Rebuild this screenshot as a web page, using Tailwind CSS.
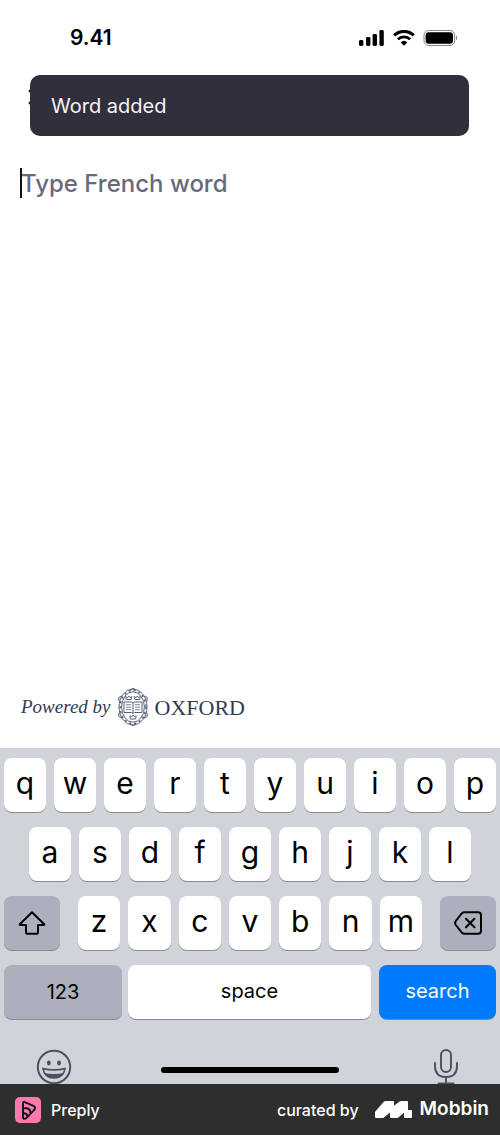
<!DOCTYPE html>
<html lang="en">

<head>
    <meta charset="UTF-8">
    <meta name="viewport" content="width=device-width, initial-scale=1.0">
    <script src="https://cdn.jsdelivr.net/npm/@tailwindcss/browser@4"></script>
    <title>Add word</title>
</head>

<body class="flex min-h-screen flex-col bg-white font-['Inter',sans-serif] text-black">

    <!-- status bar -->
    <header class="flex h-[75px] items-center justify-between pr-[41px] pl-[70px]">
        <span class="text-[21px] font-semibold">9.41</span>
        <div class="flex items-center gap-2">
            <svg class="h-4 w-[26px]" viewBox="0 0 26 16">
                <rect x="0" y="10" width="4.4" height="6" rx="1.4" />
                <rect x="7" y="7" width="4.4" height="9" rx="1.4" />
                <rect x="13.6" y="4" width="4.4" height="12" rx="1.4" />
                <rect x="20.4" y="0" width="4.4" height="16" rx="1.4" />
            </svg>
            <svg class="h-4 w-[22px]" viewBox="0 0 22 16">
                <path d="M1.2 5.4A14 14 0 0 1 20.8 5.4" fill="none" stroke="#000" stroke-width="3" />
                <path d="M4.9 9.3A8.7 8.7 0 0 1 17.1 9.3" fill="none" stroke="#000" stroke-width="2.8" />
                <path d="M7.7 12.4A4.8 4.8 0 0 1 14.3 12.4L11 15.8Z" />
            </svg>
            <svg class="h-4 w-9" viewBox="0 0 36 16">
                <rect x="1" y=".5" width="30.6" height="15" rx="4.6" fill="none" stroke="#888" />
                <rect x="2.6" y="2.2" width="27.4" height="11.6" rx="3.2" />
                <path d="M33 5.6C34.6 6.2 34.6 9.6 33 10.2Z" fill="#888" />
            </svg>
        </div>
    </header>

    <main class="relative flex flex-1 flex-col">
        <div class="flex h-[78px] items-start px-7 pt-[14px]">
            <button aria-label="Close">
                <svg class="size-4" viewBox="0 0 16 16" fill="none" stroke="#121117" stroke-width="2.4" stroke-linecap="round">
                    <path d="M1.8 1.8 14.2 14.2M14.2 1.8 1.8 14.2" />
                </svg>
            </button>
        </div>

        <div role="status" class="absolute top-0 right-[31px] left-[30px] flex h-[61px] items-center rounded-[10px] bg-[#322f3c] px-[21px] text-[20px] text-[#f4f4f8]">
            Word added
        </div>

        <div class="relative px-[21px]">
            <input type="text" aria-label="Type French word" placeholder="Type French word" class="h-[60px] w-full text-[24px] font-medium outline-none placeholder:text-[#6a697c]">
            <span class="absolute top-[15px] left-5 h-[30px] w-0.5 bg-[#121117]"></span>
        </div>

        <div class="mt-auto mb-[21px] flex h-10 items-center gap-[7px] px-[21px] font-['Liberation_Serif',serif] text-[#323a54]">
            <span class="text-[19px] italic">Powered by</span>
            <svg class="h-[38px] w-[30px]" viewBox="0 0 30 38" fill="none" stroke="#59617a" stroke-width="1">
                <ellipse cx="15" cy="19" rx="11.4" ry="15.2" />
                <ellipse cx="15" cy="19" rx="14" ry="18" />
                <ellipse cx="15" cy="19" rx="12.8" ry="16.7" stroke-width="1.6" stroke-dasharray="2 3" />
                <path d="M6 14H13.5L15 15L16.5 14H24V24.5H16.5L15 25.5L13.5 24.5H6ZM15 15V25" />
                <path d="M8 16.7H13M8 19.2H13M8 21.7H13M17 16.7H22M17 19.2H22M17 21.7H22" stroke-width=".8" />
                <path d="M8.3 11.5 7.7 8.5 9.6 9.6 10.8 8 12 9.6 13.8 8.5 13.2 11.5ZM16.8 11.5 16.2 8.5 18 9.6 19.2 8 20.4 9.6 22.3 8.5 21.7 11.5ZM12.4 31 11.8 27.8 13.7 28.8 15 27 16.3 28.8 18.2 27.8 17.6 31Z" />
                <path d="M12 1.8 15 .4 18 1.8M12 36.2 15 37.6 18 36.2M.8 13V9.5L4 8M29.2 13V9.5L26 8M.8 25V28.5L4 30M29.2 25V28.5L26 30" />
            </svg>
            <span class="text-[22px]">OXFORD</span>
        </div>
    </main>

    <!-- keyboard -->
    <section class="flex h-[336px] flex-col gap-[15px] overflow-hidden bg-[#d0d3da] px-1 pt-[10px] text-[30px] leading-none">
        <div class="grid h-[54px] shrink-0 grid-cols-10 gap-2 *:rounded-lg *:bg-white *:pb-1 *:shadow-[0_1px_0_#898a8d]">
            <button>q</button>
            <button>w</button>
            <button>e</button>
            <button>r</button>
            <button>t</button>
            <button>y</button>
            <button>u</button>
            <button>i</button>
            <button>o</button>
            <button>p</button>
        </div>
        <div class="grid h-[54px] shrink-0 grid-cols-9 gap-2 px-[25px] *:rounded-lg *:bg-white *:pb-1 *:shadow-[0_1px_0_#898a8d]">
            <button>a</button>
            <button>s</button>
            <button>d</button>
            <button>f</button>
            <button>g</button>
            <button>h</button>
            <button>j</button>
            <button>k</button>
            <button>l</button>
        </div>
        <div class="flex h-[54px] shrink-0 gap-[18px]">
            <button aria-label="Shift" class="flex w-14 items-center justify-center rounded-lg bg-[#abb0bc] shadow-[0_1px_0_#898a8d]">
                <svg class="h-6 w-7" viewBox="0 0 28 24" fill="none" stroke="#000" stroke-width="1.9" stroke-linejoin="round">
                    <path d="M14 1.2 26.2 13.2Q26.6 14 25.8 14H20V21.2Q20 22.8 18.4 22.8H9.6Q8 22.8 8 21.2V14H2.2Q1.4 14 1.8 13.2Z" />
                </svg>
            </button>
            <div class="grid flex-1 grid-cols-7 gap-2 *:rounded-lg *:bg-white *:pb-1 *:shadow-[0_1px_0_#898a8d]">
                <button>z</button>
                <button>x</button>
                <button>c</button>
                <button>v</button>
                <button>b</button>
                <button>n</button>
                <button>m</button>
            </div>
            <button aria-label="Delete" class="flex w-14 items-center justify-center rounded-lg bg-[#abb0bc] shadow-[0_1px_0_#898a8d]">
                <svg class="h-6 w-7" viewBox="0 0 28 24" fill="none" stroke="#000" stroke-width="2" stroke-linejoin="round" stroke-linecap="round">
                    <path d="M10.4 1.2H24Q27 1.2 27 4.2V19.8Q27 22.8 24 22.8H10.4Q9 22.8 8 21.8L1.8 14Q.4 12 1.8 10L8 2.2Q9 1.2 10.4 1.2ZM12 7.8 20.4 16.2M20.4 7.8 12 16.2" />
                </svg>
            </button>
        </div>
        <div class="flex h-[54px] shrink-0 text-[20px] *:rounded-lg *:shadow-[0_1px_0_#898a8d]">
            <button class="w-[118px] bg-[#abb0bc]">123</button>
            <button class="mr-2 ml-1.5 flex-1 bg-white pb-0.5">space</button>
            <button class="w-[117px] bg-[#007aff] pb-0.5 text-white">search</button>
        </div>
        <div class="flex items-start justify-between px-8 pt-[15px]">
            <button aria-label="Emoji">
                <svg class="size-9" viewBox="0 0 36 36" fill="none" stroke="#4b505b" stroke-width="2">
                    <circle cx="18" cy="18" r="16.2" />
                    <ellipse cx="12.8" cy="14" rx="1.9" ry="2.4" fill="#4b505b" stroke="none" />
                    <ellipse cx="23" cy="14" rx="1.9" ry="2.4" fill="#4b505b" stroke="none" />
                    <path d="M7 19.6Q18 22.2 29 19.6Q27.6 29 18 29Q8.4 29 7 19.6Z" stroke-width="1.6" />
                    <path d="M8.4 24Q18 26 27.6 24Q24.5 29 18 29Q11.5 29 8.4 24Z" fill="#4b505b" stroke="none" />
                </svg>
            </button>
            <span class="mt-[18px] h-1.5 w-[178px] rounded-full bg-black"></span>
            <button aria-label="Dictate" class="flex w-9 justify-center">
                <svg class="h-9 w-[26px]" viewBox="0 0 26 36" fill="none" stroke="#4b505b" stroke-width="1.9" stroke-linecap="round">
                    <rect x="8" y="1" width="10" height="22" rx="5" />
                    <path d="M2 14V17Q2 28 13 28T24 17V14M13 28V34M5.5 34.5H20.5" />
                </svg>
            </button>
        </div>
    </section>

    <footer class="flex h-[51px] items-center justify-between bg-[#2e2e2e] pr-[11px] pl-[15px] text-[16px] font-medium text-white">
        <div class="flex items-center gap-2.5">
            <svg class="size-[26px]" viewBox="0 0 26 26">
                <rect width="26" height="26" rx="5" fill="#ff7aac" />
                <path d="M8 6.4Q8 4.4 9.8 5.2L18.4 8.8Q21.4 10.4 19.2 12.8L11.6 20.8Q8 23.4 8 19.5ZM8 11.3H11.5Q15.5 11.8 15.4 16.2M8 16.3Q11.8 15.8 12.3 19" fill="none" stroke="#121117" stroke-width="1.9" stroke-linejoin="round" />
            </svg>
            <span>Preply</span>
        </div>
        <div class="flex items-center">
            <span class="mr-4">curated by</span>
            <svg class="mr-2 h-[17px] w-[37px]" viewBox="0 0 37 17" fill="#fff">
                <path d="M0 16V11.5Q0 10.6.7 9.9L8.6 1Q9.5 0 11 0H18Q19 0 19 1V4.8L24.2.7Q25 0 26.2 0H32Q33 0 33 1V9H36Q37 9 37 10V16Q37 17 36 17H30Q29 17 29 16V11.8L23.4 16.4Q22.6 17 21.6 17H16Q15 17 15 16V11.6L9 16.4Q8.2 17 7.2 17H1Q0 17 0 16Z" />
            </svg>
            <span class="text-[19px] font-semibold">Mobbin</span>
        </div>
    </footer>

</body>

</html>
